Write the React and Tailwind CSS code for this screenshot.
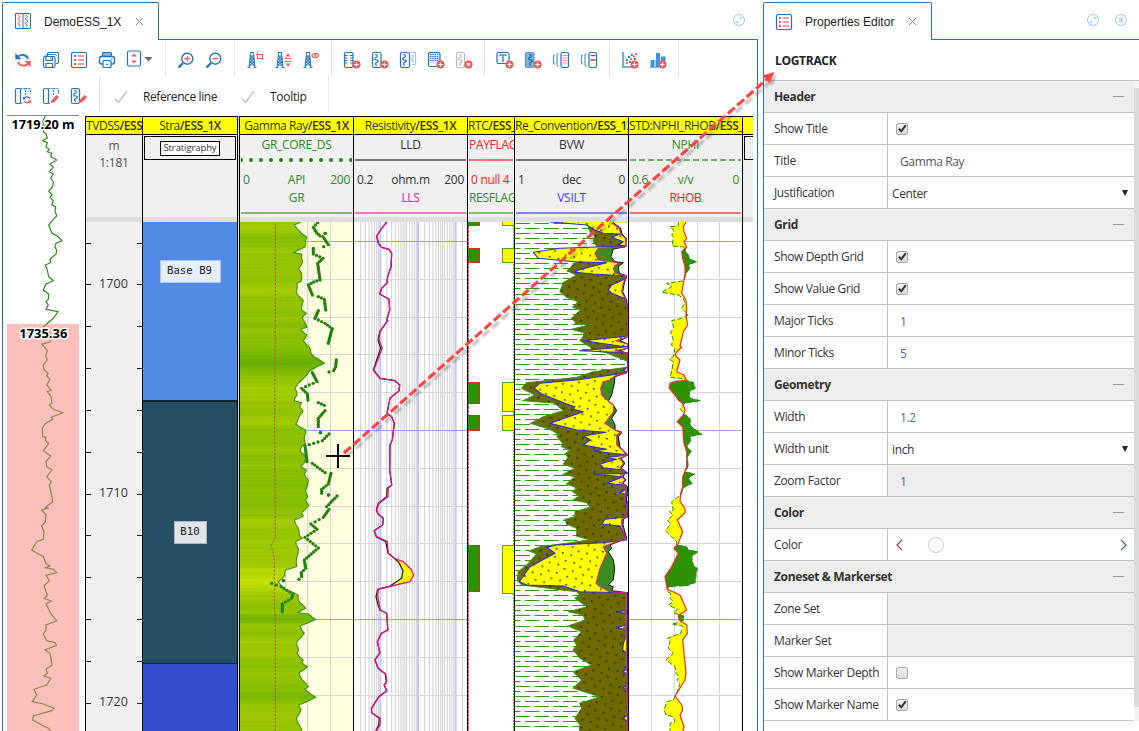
import React from "react";

/* ---------- curve helpers ---------- */
// Curves are digitised in thirds of a pixel, in segments with their own origin.
const curve = (...segs) =>
  segs.flatMap(([ox, oy, s]) =>
    s.trim().split(/\s+/).map((p) => {
      const [x, y] = p.split(",").map(Number);
      return [ox + x / 3, oy + y / 3];
    })
  );
const line = (pts) => "M" + pts.map((p) => p[0].toFixed(1) + " " + p[1].toFixed(1)).join("L");
const fillTo = (pts, x) => line(pts) + `L${x} ${pts[pts.length - 1][1]}L${x} ${pts[0][1]}Z`;
const at = (pts, y) => {
  for (let i = 1; i < pts.length; i++) {
    const [x0, y0] = pts[i - 1];
    const [x1, y1] = pts[i];
    if (y <= y1) return y1 === y0 ? x1 : x0 + ((x1 - x0) * Math.max(0, y - y0)) / (y1 - y0);
  }
  return pts[pts.length - 1][0];
};
const rough = (pts, amp) => {
  const out = [];
  for (let i = 1; i < pts.length; i++) {
    const [x0, y0] = pts[i - 1];
    const [x1, y1] = pts[i];
    out.push(pts[i - 1]);
    if (y1 - y0 > 3.5) out.push([(x0 + x1) / 2 + (i % 2 ? amp : -amp), (y0 + y1) / 2]);
  }
  out.push(pts[pts.length - 1]);
  return out;
};
// Core samples: about one every two pixels of depth, never further apart than four pixels.
const samples = (pts) => {
  const out = [pts[0]];
  for (let i = 1; i < pts.length; i++) {
    const [x0, y0] = pts[i - 1];
    const dx = pts[i][0] - x0, dy = pts[i][1] - y0;
    const n = Math.max(1, Math.round(Math.max(Math.abs(dy) / 2, Math.hypot(dx, dy) / 4.2)));
    for (let k = 1; k <= n; k++) out.push([x0 + (dx * k) / n, y0 + (dy * k) / n]);
  }
  return out;
};

const overview = curve(
  [0, 110, "136,18 128,35 134,50 130,65 138,72 142,84 128,92 142,98 138,112 148,118 142,125 155,130 152,140 170,150 150,162 160,172 148,185 160,192 152,205 160,215 158,230 146,243 156,255 150,262 160,272 155,285 167,290 165,302 170,318 160,328 146,345 156,370 172,378 186,392 168,400 165,412 170,420 168,432 150,448 152,458 136,465 142,480 146,500 160,512 138,522 130,540 146,552 145,568 138,575 145,585 138,598 174,605 160,625 138,644"],
  [0, 320, "130,20 150,40 150,66 126,72 142,92 137,108 142,120 130,135 132,150 144,160 140,168 150,178 140,195 154,210 142,215 152,228 156,248 148,255 160,268 188,278 154,292 158,298 135,312 127,325 128,350 138,352 136,362 146,370 130,392 152,408 138,425 140,440 156,450 140,470 154,485 148,495 154,520 158,545 135,563 146,564 125,570 138,585 136,605 125,618 132,635 130,658 110,665 95,690 130,710 138,730 150,738 136,743 160,748 170,758 138,766 148,782 132,798 142,826 132,835 154,843 138,852 150,875 155,885 170,902 138,915 138,930 130,942 140,962 165,968 170,976 135,990 150,1000 156,1035 138,1048 142,1060 132,1068 152,1075 140,1095 102,1108 110,1125 97,1145 130,1152 162,1165 155,1172 100,1188 98,1200 125,1215 145,1225 152,1233"]
);
const gr = rough(
  curve(
    [235, 110, "198,336 178,345 202,372 216,382 212,398 208,412 176,428 200,432 203,455 192,475 200,490 198,515 186,520 184,545 188,555 205,572 200,600 214,610 202,625 215,650"],
    [235, 320, "215,22 198,27 215,45 205,62 222,80 228,100 240,112 268,130 225,152 200,180 180,205 186,225 178,242 200,248 195,262 204,275 190,295 182,312 212,330 208,350 212,372 200,380 196,395 212,410 210,425 198,438 214,450 208,462 220,480 212,510 218,530 212,540 222,555 200,578 205,588 178,600 190,625 192,645 202,655 182,665 190,685 186,710 185,740 152,750 150,765 130,785 150,808 190,825 192,845 212,865 188,878 222,882 242,898 195,918 208,940 185,965 190,985 186,1000 205,1020 200,1028 218,1040 192,1058 202,1080 220,1100 210,1108 218,1115 242,1132 192,1155 198,1168 184,1195 196,1220 200,1236"]
  ),
  0.6
);
const grBase = curve([235, 320, "121,-300 121,0 119,300 121,655 108,675 118,710 118,850 121,900 121,1236"]);
const coreRuns = [
  curve([235, 110, "248,338 235,352 245,368 255,378"]),
  curve([235, 110, "270,370 271,370"]),
  curve([235, 110, "264,380 280,404 266,410"]),
  curve([235, 110, "235,415 235,432 264,445 248,460 255,510 236,516 220,525 232,555"]),
  curve([235, 110, "250,560 268,568 272,600"]),
  curve([235, 110, "250,602 240,625 270,640 292,656"], [235, 320, "290,30 280,70"]),
  curve([235, 320, "304,120 302,140 296,152 282,156"]),
  curve([235, 320, "232,158 246,185 200,205 217,222 219,240"]),
  curve([235, 320, "250,248 268,256"]),
  curve([235, 320, "270,272 250,295 250,320"]),
  curve([235, 320, "256,338 257,338"]),
  curve([235, 320, "282,342 262,362 210,378 216,425 232,430 270,458"]),
  curve([235, 320, "288,460 280,492 260,508 260,520"]),
  curve([235, 320, "280,525 281,525"]),
  curve([235, 320, "306,528 275,560 282,568 265,592 228,612 246,628 210,652 250,684 208,720 212,745 199,758 200,770 192,778"]),
  curve([235, 320, "145,782 146,782"]),
  curve([235, 320, "110,790 138,800 174,822 170,835 142,852 142,875"]),
].flatMap(samples);
const resTop = [235, 110, "455,336 440,355 425,378 430,400 440,412 462,418 470,430 468,470 458,500 455,520 440,535 434,552 462,568 464,600 455,630"];
const lls = curve(resTop, [235, 320, "458,2 435,35 432,60 442,85 416,150 436,175 480,182 494,195 492,212 465,235 456,280 470,290 478,310 472,360 465,375 464,450 470,495 460,505 459,530 432,550 425,570 430,582 445,595 443,615 418,632 425,650 457,665 460,700 478,715 505,725 528,748 536,765 525,785 470,798 430,808 428,830 433,855 436,870 455,880 459,930 440,940 427,965 435,998 420,1020 430,1045 452,1062 455,1085 448,1095 456,1112 432,1130 410,1165 410,1178 436,1195 435,1215 422,1236"]);
const lld = curve(resTop, [235, 320, "458,2 434,35 429,60 437,85 415,150 435,175 480,182 494,195 492,212 465,235 456,280 470,290 478,310 472,360 465,375 464,450 470,495 456,505 455,530 430,550 424,570 429,582 445,595 443,615 417,632 424,650 452,665 459,700 478,715 492,728 504,752 500,775 465,798 428,808 423,830 429,855 435,870 455,880 458,930 439,940 427,965 434,998 420,1020 429,1045 451,1062 454,1085 447,1095 455,1112 431,1130 409,1165 410,1178 433,1195 431,1215 421,1236"]);

const silt = curve(
  [460, 110, "400,332 385,352 392,370 405,378 400,395 412,410 410,440 345,458 322,483 350,495 310,518 300,545 320,562 355,575 338,592 362,600 335,625 355,645"],
  [460, 320, "345,10 390,14 335,28 372,38 370,50 360,62 390,80 400,92 435,97 455,105 500,122 505,140 480,145 400,155 350,172 200,188 185,205 225,225 190,242 285,250 310,272 250,290 212,310 270,328 300,345 290,348 308,370 305,380 330,390 315,402 325,412 310,432 345,445 310,463 345,470 320,492 350,503 338,515 358,528 340,540 380,548 390,562 345,575 345,590 315,598 320,612 350,625 350,648 390,660 330,668 240,680 208,693 230,702 200,735 175,755 172,780 185,795 350,815 360,825 345,835 382,860 325,875 370,885 375,900 325,918 365,935 342,960 350,975 340,990 360,1015 395,1035 340,1055 365,1080 340,1105 420,1130 360,1150 365,1165 345,1195 360,1215 358,1236"]
);
const sand = curve(
  [460, 110, "270,336 380,345 400,358 430,370 480,372 455,382 490,395 475,405 500,408 300,415 220,427 235,445 345,455 440,458 355,480 345,487 400,492 490,497 500,505 455,525 445,540 455,550 500,568 503,600 503,640"],
  [460, 320, "503,48 370,62 480,78 503,80 358,92 503,98 503,140 490,150 500,158 350,180 240,190 222,205 245,222 320,252 345,260 340,268 370,275 270,310 350,330 438,337 372,348 390,360 370,375 440,388 400,393 503,405 435,413 470,418 420,432 430,443 490,450 503,460 405,463 490,470 440,490 490,495 503,505 480,518 503,525 488,538 503,545 503,590 435,598 425,612 480,618 500,660 430,668 290,675 260,682 285,700 210,740 178,785 200,795 310,798 360,815 503,818 503,870 470,877 503,880 503,915 470,922 495,930 503,940 490,970 488,990 500,1000 503,1045 488,1055 503,1062 503,1095 488,1103 503,1110 503,1185 490,1195 503,1205 503,1236"]
);
const bvw = curve(
  [460, 110, "455,338 478,355 482,372 497,385 497,410 415,415 405,430 415,450 475,458 460,475 465,490 500,497 490,520 485,545 495,565 503,600"],
  [460, 320, "503,50 468,62 503,72 503,85 465,92 503,100 503,145 500,158 465,168 450,180 430,185 422,205 425,225 448,245 460,255 462,272 435,310 465,330 485,335 470,345 470,375 487,390 503,405 480,415 490,430 480,445 495,455 485,470 495,480 485,490 500,500 492,540 500,560 500,590 485,598 485,615 497,655 430,680 440,700 420,745 408,790 420,800 450,815 500,818 500,870 492,877 501,885 500,915 490,925 501,935 499,990 502,1100 496,1104 502,1112 502,1236"]
);
const gas = curve(
  [460, 110, "460,338 482,355 486,372 499,385 497,410 460,417 453,440 465,455 490,458 475,470 478,490 500,497 493,520 488,545 497,565 504,600"],
  [460, 320, "504,50 480,62 504,72 504,85 478,92 504,100 504,145 500,158 465,170 463,190 455,225 445,243 460,255 470,272 455,295 465,315 465,330 485,338 475,350 480,380 487,390 503,405 484,415 494,430 484,445 498,455 489,470 498,480 489,490 503,500 498,560 503,590 490,598 489,615 500,655 450,675 455,685 445,695 460,720 464,745 460,780 445,795 460,800 455,812 503,818 504,1236"]
);
const rhob = curve(
  [460, 110, "678,336 670,350 672,365 680,385 672,395 680,410 665,425 668,445 675,470 675,490 672,510 668,530 665,550 678,570 680,600 678,615"],
  [460, 320, "680,0 683,15 670,35 667,50 660,78 665,82 650,95 645,105 660,120 650,155 672,165 680,182 650,183 630,190 628,205 645,225 655,240 668,250 675,270 670,285 652,305 668,320 670,345 672,370 680,395 680,440 668,470 668,500 662,520 660,545 675,565 675,578 652,600 668,635 655,670 642,685 655,700 635,740 615,770 622,808 660,825 680,870 665,880 655,888 658,900 680,915 682,940 668,960 672,1000 678,1060 675,1080 645,1128 665,1155 668,1170 660,1185 672,1220 668,1236"]
);
const nphi = curve(
  [460, 110, "655,336 655,348 630,350 642,362 635,375 640,380 637,408 680,412 675,420 685,435 690,448 710,455 685,465 690,475 678,490 672,512 620,520 635,530 605,547 655,555 670,565 675,580 665,595 685,615 665,625"],
  [460, 320, "635,2 642,25 632,35 640,60 634,75 645,85 640,110 628,118 640,125 636,150 630,172 660,175 680,182 700,187 706,205 688,215 690,235 722,242 675,250 660,265 672,282 690,295 692,318 708,330 726,343 690,350 692,365 680,378 694,395 682,410 685,440 675,455 704,462 685,475 697,490 672,502 662,525 635,545 640,570 628,575 640,585 622,600 632,612 616,632 650,665 650,675 680,680 685,690 714,695 695,710 700,735 712,745 708,765 706,788 680,797 640,799 625,801 622,815 632,820 630,835 640,845 625,855 652,868 640,879 672,888 670,902 655,908 635,912 668,918 662,940 640,948 622,955 630,965 625,985 640,1000 618,1020 645,1040 648,1060 658,1072 650,1080 660,1090 655,1105 650,1120 640,1140 620,1145 612,1170 618,1185 640,1190 645,1205 630,1210 630,1236"]
);

const rows = [];
for (let y = 222; y < 731; y++) rows.push(y);
const crossFill = (a, b) =>
  rows.map((y) => {
    const x0 = at(a, y + 0.5), x1 = at(b, y + 0.5);
    return x0 < x1 ? `M${x0.toFixed(1)} ${y + 0.5}H${x1.toFixed(1)}` : "";
  }).join("");
const mix = (a, b, t) => a.map((v, i) => Math.round(v + (b[i] - v) * t));
const grColor = (x, y) => {
  const n = Math.sin(y * 1.7) * 0.5 + Math.sin(y * 0.43) * 0.6;
  const v = (x - 301) / 26 + n * 0.08;
  const c = v < 0 ? mix([148, 196, 0], [200, 228, 0], Math.min(1, -v)) : mix([148, 196, 0], [92, 168, 0], Math.min(1, v));
  return `rgb(${c.join(",")})`;
};
const minorY = [279.5, 317.5, 354.5, 392.5, 468.5, 506.5, 543.5, 581.5, 657.5, 695.5];
const majorY = [241.5, 430.5, 619.5];

function HGrid({ x0, x1 }) {
  return (
    <>
      {minorY.map((y) => <path key={y} d={`M${x0} ${y}H${x1}`} stroke="#d6d6d6" strokeWidth="1" />)}
      {majorY.map((y) => <path key={y} d={`M${x0} ${y}H${x1}`} stroke="#9e9ef6" strokeWidth="1" />)}
    </>
  );
}
function Plot({ x, w, children }) {
  return (
    <svg className="block shrink-0" width={w} height="509" viewBox={`${x} 222 ${w} 509`}>
      {children}
    </svg>
  );
}

/* ---------- tracks ---------- */
function Track({ width, name, well, header, children, last }) {
  return (
    <div className={`flex shrink-0 flex-col overflow-hidden border-black ${last ? "" : "border-l"} ${width}`}>
      <div className="flex h-[19px] shrink-0 items-center overflow-hidden border-y border-black bg-[#ffff00] text-[12px] tracking-[-0.43px] whitespace-nowrap text-[#333] [justify-content:safe_center]">
        <span>{name}<b className="font-semibold">{well ? "/" + well : ""}</b></span>
      </div>
      <div className="h-[82px] shrink-0 overflow-hidden bg-[#f0f0f0]">{header}</div>
      <div className="h-[5px] shrink-0 bg-[#dedede]" />
      {children}
    </div>
  );
}
function Curve2({ top, topLine, left, unit, right, scaleColor, bottom, bottomLine, clip }) {
  const j = clip ? "justify-start pl-px" : "justify-center";
  return (
    <div className="flex flex-col text-[12px] tracking-[-0.3px] whitespace-nowrap">
      <div className={`flex h-5 items-center ${j} ${scaleColor}`}><span>{top}</span></div>
      <div className="flex h-[10px] items-center px-px">{topLine}</div>
      <div className={`mt-[6px] grid h-[18px] grid-cols-[1fr_auto_1fr] items-center px-[3px] ${scaleColor}`}>
        <span>{left}</span><span>{unit}</span><span className="text-right">{right}</span>
      </div>
      <div className={`flex h-[18px] items-center ${j} ${bottom[1]}`}><span>{bottom[0]}</span></div>
      <div className="flex h-[10px] items-center px-px pt-[2px]"><div className={`h-[2px] w-full ${bottomLine}`} /></div>
    </div>
  );
}

function Overview() {
  return (
    <div className="ml-1 h-[616px] w-[72px]">
      <svg className="block" width="72" height="616" viewBox="7 115 72 616" fontFamily="'Open Sans','Noto Sans',sans-serif">
        <path d="M7 115.5H79" stroke="#8a8a8a" />
        <path d={line(overview)} fill="none" stroke="#2c8a1c" strokeWidth="1.2" />
        <rect x="7" y="324" width="72" height="407" fill="#f87f7a" fillOpacity=".5" />
        <g fontWeight="700" fontSize="12.5" textAnchor="middle" stroke="#fff" strokeWidth="3" paintOrder="stroke" strokeLinejoin="round" fill="#000">
          <text x="43" y="129" textLength="63" lengthAdjust="spacingAndGlyphs">1719.20 m</text>
          <text x="43.300" y="338" textLength="48" lengthAdjust="spacingAndGlyphs">1735.36</text>
        </g>
      </svg>
    </div>
  );
}

function DepthTrack() {
  const ticks = Array.from({ length: 12 }, (_, i) => Math.round(242.6 + i * 41.82) + 0.5);
  return (
    <Track width="w-[57px]" name="TVDSS" well="ESS" header={
      <div className="flex flex-col items-center pt-[2px] text-[12px] leading-[17px] tracking-[-0.2px] text-[#555]"><span>m</span><span>1:181</span></div>
    }>
      <Plot x={86} w={56}>
        <rect x="86" y="222" width="56" height="509" fill="#f0f0f0" />
        {ticks.map((y) => <path key={y} d={`M86 ${y}h5M137 ${y}h5`} stroke="#222" />)}
        <g fontFamily="'Open Sans','Noto Sans',sans-serif" fontSize="12.500" fill="#333" textAnchor="middle">
          <text x="113.500" y="288" textLength="29">1700</text>
          <text x="113.500" y="497" textLength="29">1710</text>
          <text x="113.500" y="706" textLength="29">1720</text>
        </g>
      </Plot>
    </Track>
  );
}
function StratTrack() {
  return (
    <Track width="w-[95px]" name="Stra" well="ESS_1X" header={
      <div className="mx-px mt-px flex h-6 items-center justify-center border border-black">
        <div className="flex h-[15px] items-center border border-black bg-white px-[2px] text-[9.500px] tracking-[-0.100px] text-[#333]">Stratigraphy</div>
      </div>
    }>
      <div className="h-[178px] shrink-0 bg-[#518be6] pt-[38px]">
        <div className="mx-auto flex h-[23px] w-[61px] items-center justify-center border border-[#aac6f5] bg-[#e5eefb] pr-px font-['DejaVu_Sans_Mono'] text-[10.700px] whitespace-pre text-[#222]">Base B9</div>
      </div>
      <div className="h-[264px] shrink-0 border-t-2 border-b border-[#10242f] bg-[#264e64] pt-[119px]">
        <div className="mx-auto flex h-[23px] w-[33px] items-center justify-center border border-[#a9b8c0] bg-[#dfe5e8] font-['DejaVu_Sans_Mono'] text-[10.700px] text-[#222]">B10</div>
      </div>
      <div className="h-[67px] shrink-0 bg-[#3050d0]" />
    </Track>
  );
}
function GammaTrack() {
  return (
    <Track width="w-[114px]" name="Gamma Ray" well="ESS_1X" header={
      <Curve2 top="GR_CORE_DS" left="0" unit="API" right="200" scaleColor="text-[#2c8a1c]" bottom={["GR", "text-[#2c8a1c]"]} bottomLine="bg-[#85b877]"
        topLine={<svg width="111" height="4" className="block"><path d="M0 2H111" stroke="#22800e" strokeWidth="4" strokeLinecap="round" strokeDasharray="0 10" /></svg>} />
    }>
      <Plot x={240} w={113}>
        <rect x="240" y="222" width="113" height="509" fill="#ffffe0" />
        <path d="M262.500 222V731M285.500 222V731M330.500 222V731" stroke="#d6d6d0" />
        <path d="M307.700 222V731" stroke="#dcdcd6" strokeWidth="1.500" />
        <HGrid x0={240} x1={353} />
        {rows.map((y) => <rect key={y} x="240" y={y} width={Math.max(0, at(gr, y + 0.5) - 240)} height="1.050" fill={grColor(at(gr, y + 0.5), y)} />)}
        <path d={line(gr)} fill="none" stroke="#3c9216" strokeWidth="1.100" />
        <path d={line(grBase)} fill="none" stroke="#d0366c" strokeWidth="1" strokeDasharray="2 1.700" />
        {coreRuns.map(([x, y], i) => <circle key={i} cx={x} cy={y} r="1.650" fill="#22800e" />)}
      </Plot>
    </Track>
  );
}
function ResistivityTrack() {
  const vals = [0.3, 0.4, 0.5, 0.6, 0.7, 0.8, 0.9, 150];
  for (const d of [1, 10]) for (const k of [1.5, 2, 2.5, 3, 3.5, 4, 4.5, 5, 6, 7, 8, 9]) vals.push(k * d);
  const X = (v) => 354 + Math.log10(v / 0.2) * 37.67;
  return (
    <Track width="w-[114px]" name="Resistivity" well="ESS_1X" header={
      <Curve2 top="LLD" left="0.2" unit="ohm.m" right="200" scaleColor="text-[#333]" bottom={["LLS", "text-[#e8209c]"]} bottomLine="bg-[#f873c4]"
        topLine={<div className="h-[2px] w-full bg-[#77777b]" />} />
    }>
      <Plot x={354} w={113}>
        <rect x="354" y="222" width="113" height="509" fill="#fff" />
        {vals.map((v, i) => <path key={i} d={`M${X(v)} 222V731`} stroke="#d0d0d0" strokeWidth="1" />)}
        {[1, 10, 100].map((v) => <path key={v} d={`M${X(v)} 222V731`} stroke="#c6c6fa" strokeWidth="2" />)}
        <HGrid x0={354} x1={467} />
        <path d={line(lls) + "L" + line([...lld].reverse()).slice(1) + "Z"} fill="#ff0" />
        <path d={line(lld)} fill="none" stroke="#1c1c1c" strokeWidth="1.200" strokeLinejoin="round" />
        <path d={line(lls)} fill="none" stroke="#dc1490" strokeWidth="1.300" strokeLinejoin="round" />
      </Plot>
    </Track>
  );
}
function FlagTrack() {
  return (
    <Track width="w-[47px]" name="RTC" well="ESS_1X" header={
      <Curve2 clip top="PAYFLAG" left="0 null 4" unit="" right="" scaleColor="text-[#f02020]" bottom={["RESFLAG", "text-[#2c8a1c]"]} bottomLine="bg-[#85c070]"
        topLine={<div className="h-[2px] w-full bg-[#f07878]" />} />
    }>
      <Plot x={468} w={46}>
        <rect x="468" y="222" width="46" height="509" fill="#fff" />
        <path d="M468.500 222V731" stroke="#f04040" strokeDasharray="3 1" />
        <path d="M513.500 222V731" stroke="#6db85e" strokeDasharray="2 1" />
        {[[221, 4.5], [248.5, 14], [382.5, 21], [415.5, 15], [545.5, 46]].map(([y, h]) => (
          <rect key={y} x="467.500" y={y} width="12" height={h} fill="#2c9200" stroke="#e02a20" />
        ))}
        {[[221, 4.5], [248.5, 14], [382.5, 29], [415.5, 15], [545.5, 48]].map(([y, h]) => (
          <rect key={y} x="502.500" y={y} width="12" height={h} fill="#ff0" stroke="#4aa820" />
        ))}
      </Plot>
    </Track>
  );
}
function LithoTrack() {
  const shale = Array.from({ length: 102 }, (_, i) => [Math.round(223.1 + i * 5.03) + 0.5, i % 2]);
  return (
    <Track width="w-[114px]" name="Re_Convention" well="ESS_1X" header={
      <Curve2 top="BVW" left="1" unit="dec" right="0" scaleColor="text-[#333]" bottom={["VSILT", "text-[#4040f4]"]} bottomLine="bg-[#8585f8]"
        topLine={<div className="h-[2px] w-full bg-[#77777b]" />} />
    }>
      <Plot x={515} w={113}>
        <defs>
          <pattern id="dots" x="515" y="222" width="16" height="16" patternUnits="userSpaceOnUse" patternTransform="rotate(-6)">
            <path d="M2 2h1.600v1.600h-1.600zM10 5h1.600v1.600h-1.600zM4 10h1.600v1.600h-1.600zM12.500 13h1.600v1.600h-1.600z" fill="#221e02" />
          </pattern>
        </defs>
        <rect x="515" y="222" width="113" height="509" fill="#fff" />
        {shale.map(([y, odd]) => (
          <path key={y} d={`M${odd ? 506 : 496.5} ${y}H628`} stroke="#2f9a0c" strokeWidth="1" strokeDasharray="14.500 4.500" />
        ))}
        <path d={fillTo(silt, 628)} fill="#6d6a00" stroke="#3c9216" strokeWidth="1.100" />
        <path d={fillTo(sand, 628)} fill="#ff0" />
        <path d={fillTo(silt, 628) + fillTo(sand, 628)} fill="url(#dots)" fillRule="nonzero" />
        <path d={fillTo(bvw, 629)} fill="#3d8c22" />
        <path d={fillTo(gas, 629)} fill="#fff" />
        <path d={line(gas)} fill="none" stroke="#111" strokeWidth="1" />
        <path d={line(sand)} fill="none" stroke="#2a2ae0" strokeWidth="1.100" strokeLinejoin="round" />
        <path d={line(bvw)} fill="none" stroke="#e0208c" strokeWidth="1.100" strokeLinejoin="round" />
      </Plot>
    </Track>
  );
}
function PorosityTrack() {
  return (
    <Track width="w-[114px]" name="STD:NPHI_RHOB" well="ESS_1X" header={
      <Curve2 top="NPHI" left="0.6" unit="v/v" right="0" scaleColor="text-[#2c8a1c]" bottom={["RHOB", "text-[#f02020]"]} bottomLine="bg-[#f47474]"
        topLine={<svg width="111" height="2" className="block"><path d="M0 1H111" stroke="#74b064" strokeWidth="2" strokeDasharray="6 3" /></svg>} />
    }>
      <Plot x={629} w={113}>
        <rect x="629" y="222" width="113" height="509" fill="#fff" />
        <path d="M651.500 222V731M674.500 222V731M697.500 222V731M719.500 222V731" stroke="#d6d6d6" />
        <HGrid x0={629} x1={742} />
        <path d={crossFill(nphi, rhob)} stroke="#ff0" strokeWidth="1.100" />
        <path d={crossFill(rhob, nphi)} stroke="#2c9200" strokeWidth="1.100" />
        <path d={line(nphi)} fill="none" stroke="#2c8a1c" strokeWidth="1" strokeDasharray="5 2" />
        <path d={line(rhob)} fill="none" stroke="#f42a1c" strokeWidth="1.200" strokeLinejoin="round" />
      </Plot>
    </Track>
  );
}

/* ---------- icons ---------- */
const B = "#2474b8", R = "#e85c5c";
const Ico = ({ children, className = "" }) => (
  <svg className={`block ${className}`} width="18" height="18" viewBox="0 0 18 18" fill="none" stroke={B} strokeWidth="1.200">{children}</svg>
);
const Plus = ({ x = 13.5, y = 13.5, cross }) => (
  <g><circle cx={x} cy={y} r="4" fill={R} stroke="none" />
    <path d={cross ? `M${x - 1.4} ${y - 1.4}l2.800 2.800M${x + 1.4} ${y - 1.4}l-2.800 2.800` : `M${x - 2.2} ${y}h4.400M${x} ${y - 2.2}v4.400`} stroke="#fff" strokeWidth="1.200" /></g>
);
const wave = (x) => `M${x} 3.500c3 0 3 2.500 1 3s-2 2.500 1 2.500 0 2.500-1 3 0 2.500 1 2.500`;
const LogIcon = () => (
  <svg className="ml-px block" width="17" height="17" viewBox="0 0 17 17" fill="none" strokeWidth="1">
    <path d="M.5.5h15v15h-15zM8 .5v15" stroke={B} />
    <path d="M3 2.500c2.500 0 2.500 2 1 2.300s-1.500 2 0 2.300 1.500 2 0 2.300-1.500 2 0 2.300 1 1.500 0 2" stroke={R} />
    <path d="M10.500 2.500c2.500 0 2.500 2 1 2.300s-1.500 2 0 2.300 1.500 2 0 2.300-1.500 2 0 2.300 1 1.500 0 2" stroke={B} />
  </svg>
);
const ListIcon = () => (
  <Ico><rect x="1.500" y="1.500" width="15" height="15" rx="1.500" /><path d="M4 5h2M4 9h2M4 13h2" stroke={R} strokeWidth="2" /><path d="M8 5h6M8 9h6M8 13h6" stroke="#f0a0a0" strokeWidth="1.800" /></Ico>
);
const Refresh = () => (
  <Ico><path d="M3.500 6.200c3-3.500 9-3 10.500 1.800" strokeWidth="1.900" /><path d="M1.300 2v6.300h6.300z" fill={B} stroke="none" /><path d="M14.500 12.300c-3 3.500-9 3-10.500-1.300" stroke={R} strokeWidth="1.900" /><path d="M16.700 16.300V10h-6.300z" fill={R} stroke="none" /></Ico>
);
const SaveAll = () => (
  <Ico><path d="M5.500 5V3q0-1.500 1.500-1.500h8q1.500 0 1.500 1.500v8q0 1.500-1.500 1.500h-1" /><path d="M3.500 5q0-1.500 1.500-1.500h8q1.500 0 1.500 1.500" strokeWidth=".9" /><rect x="1.500" y="5.500" width="11.500" height="11" rx="1.500" fill="#fff" /><path d="M4 5.500v4h6.500v-4M4 16.500v-4h6.500v4M8.500 6.500v1.700" /></Ico>
);
const Printer = () => (
  <Ico><rect x="4.500" y="1.500" width="9" height="4" rx="1" fill="#8ab4da" /><rect x="1.500" y="5.500" width="15" height="7.500" rx="2" strokeWidth="1.500" /><rect x="5" y="9.500" width="8" height="7" rx=".8" fill="#fff" /><path d="M8 13.500h2" /><path d="M13 8h1.500" /></Ico>
);
const FitHeight = () => (
  <svg className="block" width="28" height="18" viewBox="0 0 28 18" fill="none"><rect x="2.500" y="1" width="13" height="15" rx="1.500" stroke={B} strokeWidth="1.200" /><path d="M6.300 6.500L9 3.500l2.700 3zM6.300 10.500L9 13.500l2.700-3z" fill={R} /><path d="M19.500 7h8l-4 4.200z" fill="#666" /></svg>
);
const Zoom = ({ plus }) => (
  <Ico><circle cx="10.300" cy="7.700" r="5.500" strokeWidth="1.400" /><path d="M6 12l-4.500 4.500" strokeWidth="2.400" /><path d={plus ? "M7.300 7.700h6M10.300 4.700v6" : "M7.300 7.700h6"} stroke={R} strokeWidth="1.300" /></Ico>
);
const Rig = ({ kind }) => (
  <Ico><path d="M4 1.500h4M4.500 1.500L3 16.500M7.500 1.500L9 16.500M4 5h4M4 8h4.500M3.500 11h5M3 14h6M4 5l4.500 3-5 3 5.500 3M8 5L4 8l4.500 3-5 3M1.500 16.500h3M7.500 16.500h3" strokeWidth="1" />
    {kind === 0 && <path d="M11.500 1.500v6h6M10 3.500h6.500v5.500" stroke={R} />}
    {kind === 1 && <g stroke={R}><path d="M10.500 7.500h7M10.500 10.500h7" /><path d="M11.500 5.500L14 2.500l2.500 3zM11.500 12.500L14 15.500l2.500-3z" fill={R} stroke="none" /></g>}
    {kind === 2 && <g stroke={R}><ellipse cx="13.300" cy="4.500" rx="3.300" ry="2.200" /><circle cx="13.300" cy="4.500" r=".6" fill={R} /></g>}
  </Ico>
);
const TrackAdd = ({ children, badge = true }) => <Ico><rect x="1.500" y="1.500" width="8.500" height="15" rx="1.500" />{children}{badge && <Plus />}</Ico>;
const CurveTrack = () => <TrackAdd><path d={wave(4)} /></TrackAdd>;
const DepthIcon = () => <TrackAdd><path d="M1.500 4.500h3M1.500 7h3M1.500 9.500h3M1.500 12h3M7 4.500h3M7 7h3M7 9.500h3M7 12h3" /></TrackAdd>;
const DupIcon = () => <Ico><path d="M10.500 1.500h6v12h-4M13 4c2 0 2 2 .5 2.500s-1 2 .5 2.500 0 2-1.500 2" stroke="#a9c6e2" /><rect x="1.500" y="1.500" width="9" height="15" rx="1.500" /><path d={wave(4)} /></Ico>;
const MatrixIcon = () => <Ico><rect x="1.500" y="1.500" width="11.500" height="14" rx="1.500" fill="#d3e4f3" /><path d="M3 3.500h9M3 5.500h9M3 7.500h9M3 9.500h9" strokeWidth="1.200" strokeDasharray="1.300 1" /><path d="M2.200 11h10v3.800h-10z" fill="#fff" stroke="none" /><Plus /></Ico>;
const RemoveIcon = () => <Ico><rect x="1.500" y="1.500" width="8" height="15" rx="1.500" stroke="#bbb" /><path d={wave(4)} stroke="#bbb" /><Plus cross /></Ico>;
const TextIcon = () => <Ico><rect x="1" y="1.500" width="12" height="11" rx="1.500" /><path d="M4 5V4h6v1M7 4v6M5.800 10h2.400" /><Plus /></Ico>;
const FilledTrack = () => <Ico><rect x="1.500" y="1.500" width="8.500" height="15" rx="1.500" fill="#8ab4da" stroke="#5a98cf" /><path d={wave(5)} strokeWidth="1.500" /><Plus /></Ico>;
const Slide = ({ grid }) => (
  <Ico><rect x="9" y="1.500" width="7.500" height="15" rx="1.500" /><path d="M6.500 2.500q-1.500 0-1.500 1.500v10q0 1.500 1.500 1.500M3 4q-1.500 0-1.500 1v7q0 1 1.500 1" stroke="#5a98cf" />
    {grid ? <path d="M10.500 4.500h5M10.500 7h5M10.500 9.500h5M10.500 12h5" stroke={R} strokeDasharray="1.200 .8" /> : <g><path d="M10.500 4.500h5" /><path d="M10.500 9h5" stroke={R} strokeWidth="2" /></g>}</Ico>
);
const Scatter = () => <Ico><path d="M2 1v15h15" stroke="#7badd8" strokeWidth="2" /><path d="M5 9h1.800M7 6h1.800M10 4h1.800M13 8h1.800M8 11h1.800" strokeWidth="1.800" /><path d="M5 12h1.800M9 8h1.800M12 5.500h1.800M14 3h1.800" stroke={R} strokeWidth="1.800" /><Plus /></Ico>;
const Histogram = () => <Ico><path d="M2 9h3.500v7H2zM7 2h4v14H7zM12 5.500h4.500v6H12z" fill="#3a92e0" stroke="none" /><path d="M1 9h1v7H1zM5.500 9H7v7H5.500z" fill="#a9c6e2" stroke="none" /><path d="M1 16.500h9" strokeWidth="1" stroke="#7badd8" /><Plus /></Ico>;
const Pencil = () => <g stroke="none" fill={R}><path d="M14.700 8l2.300 2.300-5 5-3.300 1 1-3.300z" /></g>;
const Tracks3 = ({ refresh }) => (
  <Ico><path d="M1.500 3q0-1.500 1.500-1.500h2q1.500 0 1.500 1.500v12q0 1.500-1.500 1.500H3q-1.500 0-1.500-1.500z" /><path d="M6.500 2q.5-.5 1.500-.5h2q1.500 0 1.500 1.500v5M11.500 2q.5-.5 1.500-.5h2q1.500 0 1.500 1.500v4" strokeDasharray="2 1" /><path d="M6.500 16q.5.5 1.500.5" />
    {refresh ? <g strokeWidth="1.300"><path d="M10 11q3-2.500 6 .5" /><path d="M8.800 9.200v3.300h3.300z" fill={B} stroke="none" /><path d="M16 14.500q-3 2.500-6-.2" stroke={R} /><path d="M17.200 16.500v-3.300h-3.300z" fill={R} stroke="none" /></g> : <Pencil />}</Ico>
);
const EditTrack = () => <Ico><rect x="1.500" y="1.500" width="8" height="15" rx="1.500" /><path d={wave(4)} /><Pencil /></Ico>;
const Expand = () => <svg className="block" width="14" height="14" viewBox="0 0 14 14" fill="none" stroke="#a9cdec"><circle cx="7" cy="7" r="5.500" strokeWidth="1.200" /><path d="M7.500 4.500h2.500v2M6.500 9.500H4v-2" /><path d="M8 6l1.500-1.500M6 8L4.500 9.500" strokeWidth=".7" /></svg>;
const CloseCircle = () => <svg className="block" width="14" height="14" viewBox="0 0 14 14" fill="none" stroke="#a9cdec"><circle cx="7" cy="7" r="5.500" strokeWidth="1.200" /><path d="M5 5l4 4M9 5l-4 4" strokeWidth="1.500" /></svg>;
const CloseX = () => <svg className="block" width="9" height="9" viewBox="0 0 9 9" stroke="#888" strokeWidth="1"><path d="M1 1l7 7M8 1l-7 7" /></svg>;
const Check = () => <svg className="block" width="14" height="14" viewBox="0 0 14 14" fill="none" stroke="#c6c6c6" strokeWidth="1.500"><path d="M.8 8.500l3.700 4L13 1" /></svg>;

const Group = ({ children, wide }) => (
  <div className={`flex h-9 items-center border-r border-[#e3e3e3] pt-1 pl-1.5 ${wide ? "" : "pr-1.5"}`}>
    {React.Children.map(children, (c) => <div className="flex w-7 justify-center">{c}</div>)}
    {wide}
  </div>
);

function Toolbar() {
  return (
    <div className="flex h-[72px] shrink-0 flex-col">
      <div className="flex h-9">
        <Group wide={<div className="flex w-11 pb-[3px] pl-1"><FitHeight /></div>}><Refresh /><SaveAll /><ListIcon /><Printer /></Group>
        <Group><Zoom plus /><Zoom /></Group>
        <Group><Rig kind={0} /><Rig kind={1} /><Rig kind={2} /></Group>
        <Group><DepthIcon /><CurveTrack /><DupIcon /><MatrixIcon /><RemoveIcon /></Group>
        <Group><TextIcon /><FilledTrack /><Slide grid /><Slide /></Group>
        <Group><Scatter /><Histogram /></Group>
      </div>
      <div className="flex h-9 items-center">
        <Group><Tracks3 refresh /><Tracks3 /><EditTrack /></Group>
        <div className="flex h-9 w-[229px] items-center border-r border-[#e3e3e3] pt-[5px] pl-[14px] text-[12px] tracking-[-0.400px] text-[#222]">
          <Check /><span className="ml-[15px] w-[98px] whitespace-nowrap">Reference line</span>
          <Check /><span className="ml-[15px] tracking-[-0.300px]">Tooltip</span>
        </div>
      </div>
    </div>
  );
}

/* ---------- properties ---------- */
function Box({ on }) {
  return (
    <span className="ml-2 flex h-3 w-3 items-center justify-center rounded-[2px] border border-[#aaa] bg-gradient-to-b from-[#ededed] to-[#dcdcdc]">
      {on && <svg width="9" height="9" viewBox="0 0 9 9" fill="none" stroke="#333" strokeWidth="2"><path d="M1 4.800l2.300 2.500L7.800 1.200" /></svg>}
    </span>
  );
}
const Sec = ({ children }) => (
  <div className="flex h-8 items-center justify-between border-t border-[#c2c2c2] bg-[#ededed] pr-[10px] pl-[10px] text-[12px] font-bold tracking-[-0.370px] text-[#333]">
    <span className="pt-px">{children}</span><span className="h-px w-[11px] bg-[#999]" />
  </div>
);
const Row = ({ label, gray, children }) => (
  <div className="flex h-8 border-t border-[#c2c2c2] text-[12px] tracking-[-0.370px] text-[#333]">
    <div className="flex w-[124px] shrink-0 items-center border-r border-[#c2c2c2] pl-[10px] whitespace-nowrap">{label}</div>
    <div className={`flex flex-1 items-center ${gray ? "bg-[#ededed]" : ""}`}>{children}</div>
  </div>
);
const Val = ({ children, blue }) => <span className={`pt-[2px] pl-3 ${blue ? "text-[#3f6f94]" : "text-[#555]"}`}>{children}</span>;
const Sel = ({ children }) => (
  <div className="flex flex-1 items-center justify-between pt-[2px] pr-[6px] pl-1"><span>{children}</span>
    <svg className="mb-[2px]" width="6" height="6" viewBox="0 0 6 6"><path d="M0 0h6L3 6z" fill="#222" /></svg></div>
);

function Tab({ icon, title, width }) {
  return (
    <div className={`flex h-[38px] items-center rounded-t-[2px] border border-b-0 border-[#2272b4] bg-white ${width} z-10 -mb-px`}>
      <div className="ml-[11px] w-[18px]">{icon}</div>
      <span className="ml-[12px] font-['Liberation_Sans'] text-[12px] text-[#222]">{title}</span>
      <span className="ml-[14px]"><CloseX /></span>
    </div>
  );
}

export default function App() {
  return (
    <div className="relative flex h-[731px] w-[1139px] overflow-hidden bg-white font-['Open_Sans','Noto_Sans',sans-serif]">
      <div className="ml-[2px] flex w-[756px] shrink-0 flex-col pt-[2px]">
        <div className="flex h-[37px] shrink-0 items-stretch justify-between">
          <Tab icon={<LogIcon />} title="DemoESS_1X" width="w-[157px]" />
          <div className="flex items-center pr-[12px] pb-[2px]"><Expand /></div>
        </div>
        <div className="flex flex-1 flex-col overflow-hidden border border-b-0 border-[#2272b4]">
          <Toolbar />
          <div className="flex pt-[3px]">
            <Overview />
            <div className="ml-[6px] flex w-[668px] shrink-0 overflow-hidden pt-px">
              <DepthTrack />
              <StratTrack />
              <div className="w-[2px] shrink-0 border-l border-black bg-[#ddd]" />
              <GammaTrack />
              <ResistivityTrack />
              <FlagTrack />
              <LithoTrack />
              <PorosityTrack />
              <Track width="w-[11px]" name="" header={<div className="mt-px ml-px h-6 w-5 border border-black" />} />
            </div>
          </div>
        </div>
      </div>

      <div className="ml-[5px] flex w-[376px] shrink-0 flex-col pt-[2px]">
        <div className="flex h-[37px] shrink-0 justify-between">
          <Tab icon={<ListIcon />} title="Properties Editor" width="w-[169px]" />
          <div className="flex items-center gap-[14px] pr-[11px] pb-[2px]"><Expand /><CloseCircle /></div>
        </div>
        <div className="flex flex-1 flex-col overflow-hidden border-t border-l border-[#2272b4]">
          <div className="flex h-10 shrink-0 items-center pt-[2px] pl-[11px] text-[12px] font-bold tracking-[-0.300px] text-[#222]">LOGTRACK</div>
          <div className="flex h-[641px] shrink-0">
            <div className="w-[370px] border-b border-[#c2c2c2]">
              <Sec>Header</Sec>
              <Row label="Show Title"><Box on /></Row>
              <Row label="Title"><Val>Gamma Ray</Val></Row>
              <Row label="Justification"><Sel>Center</Sel></Row>
              <Sec>Grid</Sec>
              <Row label="Show Depth Grid"><Box on /></Row>
              <Row label="Show Value Grid"><Box on /></Row>
              <Row label="Major Ticks"><Val blue>1</Val></Row>
              <Row label="Minor Ticks"><Val blue>5</Val></Row>
              <Sec>Geometry</Sec>
              <Row label="Width"><Val blue>1.2</Val></Row>
              <Row label="Width unit"><Sel>inch</Sel></Row>
              <Row label="Zoom Factor" gray><Val blue>1</Val></Row>
              <Sec>Color</Sec>
              <Row label="Color">
                <svg className="ml-2" width="7" height="12" viewBox="0 0 7 12" fill="none" stroke="#8c3a3a" strokeWidth="1.200"><path d="M6 .8L1 6l5 5.200" /></svg>
                <span className="ml-[25px] h-4 w-4 rounded-full border border-[#c8c8c8] bg-white" />
                <svg className="mr-[7px] ml-auto" width="7" height="12" viewBox="0 0 7 12" fill="none" stroke="#2a5f94" strokeWidth="1.200"><path d="M1 .8L6 6l-5 5.200" /></svg>
              </Row>
              <Sec>Zoneset &amp; Markerset</Sec>
              <Row label="Zone Set" gray />
              <Row label="Marker Set" gray />
              <Row label="Show Marker Depth"><Box /></Row>
              <Row label="Show Marker Name"><Box on /></Row>
            </div>
            <div className="flex flex-1 flex-col border-t border-[#c2c2c2] bg-[#f2f2f2] pt-[7px]">
              <div className="h-[619px] bg-[#dadada]" />
            </div>
          </div>
        </div>
      </div>

      <svg className="pointer-events-none absolute top-0 left-0 z-20" width="1139" height="731" viewBox="0 0 1139 731" fill="none">
        <defs><filter id="soft" x="-5%" y="-5%" width="110%" height="110%"><feGaussianBlur stdDeviation="1.300" /></filter></defs>
        <g filter="url(#soft)" opacity=".4"><path d="M346 457L770 82" stroke="#555" strokeWidth="3" strokeDasharray="9 4" /><path d="M777 75l-5 11-5-6z" fill="#555" /></g>
        <path d="M344 453L767 79" stroke="#fb4444" strokeWidth="3.100" strokeDasharray="9 3.500" />
        <path d="M774.500 72l-5 11-7-7.500z" fill="#fb4444" />
        <path d="M326 456h24M338 444v24" stroke="#0a0a14" strokeWidth="2" />
      </svg>
    </div>
  );
}
